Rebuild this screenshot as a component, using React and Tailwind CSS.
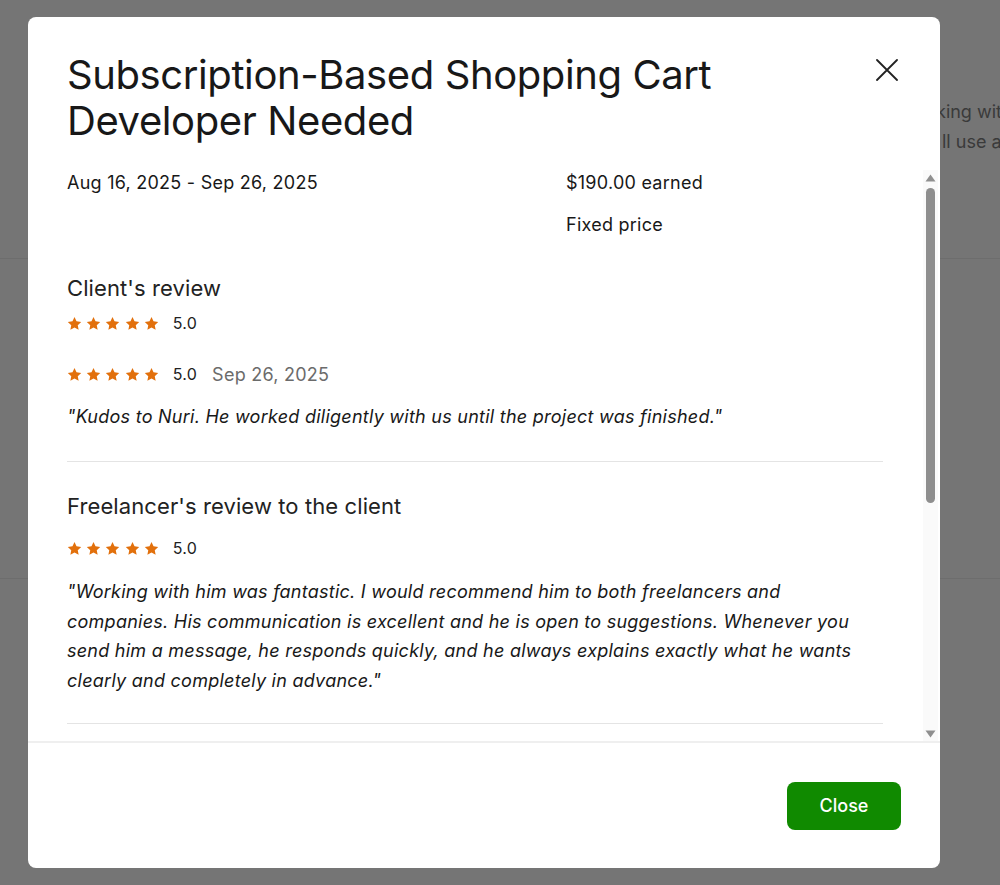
import React from "react";

const Star = () => (
  <svg width="15" height="15" viewBox="0 0 24 24" className="shrink-0">
    <path
      fill="#e2700c"
      d="M12 1.6l3.2 6.9 7.5.9-5.5 5.2 1.4 7.5L12 18.4l-6.6 3.7 1.4-7.5L1.3 9.4l7.5-.9z"
    />
  </svg>
);

const Rating = ({ date }) => (
  <div className="flex items-center h-6">
    <div className="flex gap-[4.2px]">
      {[0, 1, 2, 3, 4].map((i) => (
        <Star key={i} />
      ))}
    </div>
    <span className="ml-[14px] text-[16px] text-[#222]">5.0</span>
    {date && <span className="ml-[15px] text-[18px] text-[#6b6b6b]">{date}</span>}
  </div>
);

const Scrollbar = () => (
  <div className="w-[15px] shrink-0 bg-[#fafafa] flex flex-col items-center">
    <div className="h-[15px] flex items-center justify-center">
      <svg width="11" height="8" viewBox="0 0 11 8">
        <path d="M5.5 0.5L10.5 7.5H0.5z" fill="#8f8f8f" />
      </svg>
    </div>
    <div className="mt-[3px] w-[9px] h-[315px] rounded-full bg-[#8e8e8e]" />
    <div className="flex-1" />
    <div className="h-[15px] flex items-center justify-center">
      <svg width="11" height="8" viewBox="0 0 11 8">
        <path d="M5.5 7.5L10.5 0.5H0.5z" fill="#8f8f8f" />
      </svg>
    </div>
  </div>
);

export default function App() {
  return (
    <div className="relative w-full h-[885px] overflow-hidden bg-[#757575] font-['Inter','Liberation_Sans',Arial,sans-serif]">
      {/* page behind the overlay */}
      <div className="pl-[936px] pt-[97px] text-[18px] leading-[30px] text-[#3a3a3a] whitespace-nowrap">
        <div>king with Nuri again</div>
        <div className="ml-[6px]">ll use again</div>
      </div>
      <div className="mt-[101px] border-t border-[#6d6d6d]" />
      <div className="mt-[319px] border-t border-[#6d6d6d]" />

      {/* modal */}
      <div className="absolute left-[28px] top-[17px] w-[912px] h-[851px] bg-white rounded-[8px] flex flex-col">
        <div className="flex items-start justify-between pl-[39px] pr-[40px] pt-[35px] shrink-0">
          <h1 className="text-[40px] leading-[46px] text-[#181818] tracking-[-0.4px] max-w-[720px]">
            Subscription-Based Shopping Cart Developer Needed
          </h1>
          <button className="mt-[2px] w-8 h-8 flex items-center justify-center -mr-[3px]">
            <svg width="22" height="22" viewBox="0 0 22 22" fill="none" stroke="#222" strokeWidth="1.8" strokeLinecap="round">
              <path d="M1 1l20 20M21 1L1 21" />
            </svg>
          </button>
        </div>

        <div className="mt-[26px] flex-1 min-h-0 flex mr-[2px]">
          <div className="flex-1 overflow-hidden pl-[39px] pr-[40px] pt-[1px] text-[#181818] tracking-[0.25px]">
            <div className="grid grid-cols-[499px_1fr] text-[18px] leading-6">
              <div>Aug 16, 2025 - Sep 26, 2025</div>
              <div className="flex flex-col gap-[18px]">
                <div>$190.00 earned</div>
                <div>Fixed price</div>
              </div>
            </div>

            <section className="mt-[37px] pb-[30px] border-b border-[#e4e4e4]">
              <h2 className="text-[22px] leading-7 text-[#222] tracking-[0.1px]">Client's review</h2>
              <div className="mt-[9px]">
                <Rating />
              </div>
              <div className="mt-[27px]">
                <Rating date="Sep 26, 2025" />
              </div>
              <p className="mt-[17px] text-[18px] leading-7 italic">
                "Kudos to Nuri. He worked diligently with us until the project was finished."
              </p>
            </section>

            <section className="pt-[30px] pb-[28px] border-b border-[#e4e4e4]">
              <h2 className="text-[22px] leading-7 text-[#222] tracking-[0.1px]">Freelancer's review to the client</h2>
              <div className="mt-[16px]">
                <Rating />
              </div>
              <p className="mt-[17px] text-[18px] leading-[29.6px] italic">
                "Working with him was fantastic. I would recommend him to both freelancers and companies. His
                communication is excellent and he is open to suggestions. Whenever you send him a message, he
                responds quickly, and he always explains exactly what he wants clearly and completely in advance."
              </p>
            </section>

            <section className="pt-[40px] pb-[40px]">
              <h2 className="text-[22px] leading-7 text-[#222]">Skills and expertise</h2>
              <div className="mt-4 flex flex-wrap gap-2 text-[14px]">
                {["Shopify", "JavaScript", "E-commerce", "Subscriptions", "Web Development"].map((s) => (
                  <span key={s} className="px-3 py-1 rounded-full bg-[#f2f2f2] text-[#222]">
                    {s}
                  </span>
                ))}
              </div>
            </section>
          </div>
          <Scrollbar />
        </div>

        <div className="shrink-0 border-t-2 border-[#efefef] h-[127px] flex items-center justify-end pr-[39px]">
          <button className="w-[114px] h-12 rounded-[8px] bg-[#108a00] text-white text-[18px] font-medium">
            Close
          </button>
        </div>
      </div>
    </div>
  );
}
